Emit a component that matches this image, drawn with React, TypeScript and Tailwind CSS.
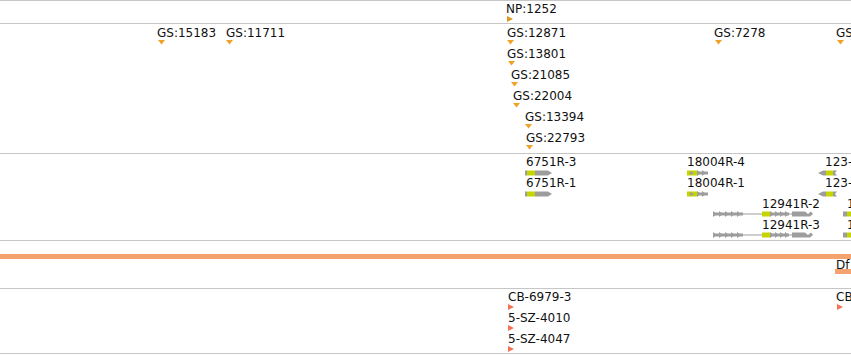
import React from "react";

const GRAY = "#9d9d9d";
const YEL = "#c6d400";
const ORANGE = "#f2a127";
const GOLD = "#d99a1e";
const RED = "#f47252";

function Label({ x, y, text }: { x: number; y: number; text: string }) {
  return (
    <div className="absolute whitespace-nowrap" style={{ left: x, top: y }}>
      {text}
    </div>
  );
}

function DownTri({ x, y }: { x: number; y: number }) {
  return (
    <svg className="absolute" style={{ left: x, top: y }} width={7} height={5}>
      <polygon points="0,0 7,0 3.5,4.5" fill={ORANGE} />
    </svg>
  );
}

function RightTri({ x, y, color }: { x: number; y: number; color: string }) {
  return (
    <svg className="absolute" style={{ left: x, top: y }} width={6} height={6}>
      <polygon points="0,0 6,3 0,6" fill={color} />
    </svg>
  );
}

// band of chevron arrows from a to b (local coords), height 6
function chevrons(a: number, b: number, key: string, step = 5) {
  const items: React.ReactNode[] = [];
  items.push(<rect key={key + "bar"} x={a} y={1.5} width={b - a} height={3} fill={GRAY} />);
  for (let x = a; x + 4 <= b; x += step) {
    items.push(
      <polygon key={key + x} points={`${x},0 ${x + 4},3 ${x},6`} fill={GRAY} />
    );
  }
  return items;
}

function Gene6751({ x, y }: { x: number; y: number }) {
  return (
    <svg className="absolute" style={{ left: x, top: y }} width={28} height={6}>
      <rect x={0} y={0.5} width={2} height={5} fill={GRAY} />
      <rect x={2} y={0.5} width={8} height={5} fill={YEL} />
      <polygon points="10,0.5 23,0.5 27,3 23,5.5 10,5.5" fill={GRAY} />
    </svg>
  );
}

function Gene18004({ x, y }: { x: number; y: number }) {
  return (
    <svg className="absolute" style={{ left: x, top: y }} width={21} height={6}>
      <rect x={0} y={0.5} width={10} height={5} fill={YEL} />
      <polygon points="3,1 7,3 3,5" fill={GRAY} />
      {chevrons(10, 21, "c")}
    </svg>
  );
}

function Gene123({ x, y }: { x: number; y: number }) {
  return (
    <svg className="absolute" style={{ left: x, top: y }} width={19} height={6}>
      <polygon points="0,3 5,0.5 8,0.5 8,5.5 5,5.5" fill={GRAY} />
      <rect x={8} y={0.5} width={7} height={5} fill={YEL} />
      <polygon points="15,0.5 19,0.5 17,3 19,5.5 15,5.5" fill={GRAY} />
    </svg>
  );
}

function Gene12941({ x, y }: { x: number; y: number }) {
  return (
    <svg className="absolute" style={{ left: x, top: y }} width={139} height={6}>
      {chevrons(0, 30, "a", 6)}
      <rect x={30} y={2.5} width={19} height={1} fill={GRAY} />
      <rect x={49} y={0.5} width={8} height={5} fill={YEL} />
      {chevrons(57, 76, "b")}
      <rect x={76} y={2.5} width={3} height={1} fill={GRAY} />
      <polygon points="79,0.5 92,0.5 95,3 98,0.5 100,3 97,5.5 79,5.5" fill={GRAY} />
      <rect x={130} y={0.5} width={4} height={5} fill={GRAY} />
      <rect x={134} y={0.5} width={5} height={5} fill={YEL} />
    </svg>
  );
}

export default function App() {
  return (
    <div className="relative w-[851px] h-[355px] overflow-hidden bg-white text-[12px] leading-[14px] text-[#111] font-['DejaVu_Sans',sans-serif]">
      <div className="flex flex-col">
        {/* Track 1 */}
        <div className="relative h-[23px] border-t border-[#c6c6c6]">
          <Label x={506} y={1} text="NP:1252" />
          <RightTri x={507} y={15} color={GOLD} />
        </div>
        {/* Track 2 */}
        <div className="relative h-[130px] border-t border-[#c6c6c6]">
          <Label x={157} y={2} text="GS:15183" />
          <DownTri x={158} y={16} />
          <Label x={226} y={2} text="GS:11711" />
          <DownTri x={226} y={16} />
          <Label x={507} y={2} text="GS:12871" />
          <DownTri x={507} y={16} />
          <Label x={714} y={2} text="GS:7278" />
          <DownTri x={715} y={16} />
          <Label x={836} y={2} text="GS:" />
          <DownTri x={837} y={16} />
          <Label x={507} y={23} text="GS:13801" />
          <DownTri x={508} y={37} />
          <Label x={511} y={44} text="GS:21085" />
          <DownTri x={511} y={58} />
          <Label x={513} y={65} text="GS:22004" />
          <DownTri x={513} y={79} />
          <Label x={525} y={86} text="GS:13394" />
          <DownTri x={525} y={100} />
          <Label x={526} y={107} text="GS:22793" />
          <DownTri x={526} y={121} />
        </div>
        {/* Track 3 */}
        <div className="relative h-[87px] border-t border-[#c6c6c6]">
          <Label x={526} y={1} text="6751R-3" />
          <Gene6751 x={525} y={16} />
          <Label x={526} y={22} text="6751R-1" />
          <Gene6751 x={525} y={37} />
          <Label x={687} y={1} text="18004R-4" />
          <Gene18004 x={687} y={16} />
          <Label x={687} y={22} text="18004R-1" />
          <Gene18004 x={687} y={37} />
          <Label x={825} y={1} text="123-" />
          <Gene123 x={818} y={16} />
          <Label x={825} y={22} text="123-" />
          <Gene123 x={818} y={37} />
          <Label x={762} y={43} text="12941R-2" />
          <Label x={847} y={43} text="1" />
          <Gene12941 x={713} y={57} />
          <Label x={762} y={64} text="12941R-3" />
          <Label x={847} y={64} text="1" />
          <Gene12941 x={713} y={78} />
        </div>
        {/* Track 4 */}
        <div className="relative h-[48px] border-t border-[#c6c6c6]">
          <div className="absolute left-0 right-0 top-[13px] h-[5px] bg-[#f4a26e]" />
          <Label x={836} y={17} text="Df" />
          <div className="absolute left-[835px] right-0 top-[28px] h-[5px] bg-[#f4a26e]" />
        </div>
        {/* Track 5 */}
        <div className="relative h-[66px] border-t border-b border-[#c6c6c6]">
          <Label x={508} y={1} text="CB-6979-3" />
          <RightTri x={508} y={15} color={RED} />
          <Label x={836} y={1} text="CB" />
          <RightTri x={837} y={15} color={RED} />
          <Label x={508} y={22} text="5-SZ-4010" />
          <RightTri x={508} y={36} color={RED} />
          <Label x={508} y={43} text="5-SZ-4047" />
          <RightTri x={508} y={57} color={RED} />
        </div>
      </div>
    </div>
  );
}
